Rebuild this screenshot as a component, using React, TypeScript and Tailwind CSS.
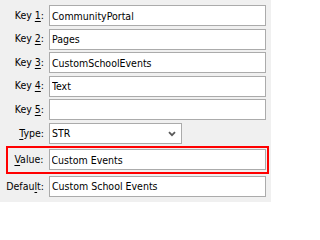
import React from "react";

const font = { fontFamily: '"DejaVu Sans Condensed", "Liberation Sans", Arial, sans-serif' };

interface FieldProps {
	before: string;
	mnemonic: string;
	after: string;
	value: string;
}

const Label: React.FC<{ before: string; mnemonic: string; after: string; className: string }> = ({
	before,
	mnemonic,
	after,
	className
}) => (
	<label className={`text-right text-[10.5px] text-black shrink-0 ${className}`}>
		{before}
		<span className="underline decoration-1 underline-offset-[1.5px]">{mnemonic}</span>
		{after}
	</label>
);

const TextBox: React.FC<{ value: string }> = ({ value }) => (
	<input
		readOnly
		value={value}
		className="h-[21px] w-[217px] border border-[#ababab] bg-white px-[2px] text-[10.5px] text-black outline-none"
		style={font}
	/>
);

const Field: React.FC<FieldProps> = ({ before, mnemonic, after, value }) => (
	<div className="flex h-[21px] items-center gap-[5px]">
		<Label before={before} mnemonic={mnemonic} after={after} className="w-[44px]" />
		<TextBox value={value} />
	</div>
);

export default function App() {
	return (
		<div className="flex h-[202px] w-[271px] flex-col bg-[#f0f0f0] pt-[5px]" style={font}>
			<div className="flex flex-col gap-[2.6px]">
				<Field before="Key " mnemonic="1" after=":" value="CommunityPortal" />
				<Field before="Key " mnemonic="2" after=":" value="Pages" />
				<Field before="Key " mnemonic="3" after=":" value="CustomSchoolEvents" />
				<Field before="Key " mnemonic="4" after=":" value="Text" />
				<Field before="Key " mnemonic="5" after=":" value="" />

				<div className="flex h-[21px] items-center gap-[5px]">
					<Label before="" mnemonic="T" after="ype:" className="w-[44px]" />
					<div className="flex h-[21px] w-[133px] items-center justify-between border border-[#ababab] bg-white pl-[2px] pr-[5px] text-[10.5px] text-black">
						<span>STR</span>
						<svg width="8" height="6" viewBox="0 0 8 6" className="mt-[1px]">
							<path d="M1 1.2 L4 4.2 L7 1.2" fill="none" stroke="#5a5a5a" strokeWidth="1.8" />
						</svg>
					</div>
				</div>
			</div>

			<div className="ml-[6px] mt-[2px] flex h-[28px] w-[263px] items-center gap-[5px] border-[2.5px] border-[#ff0000]">
				<Label before="" mnemonic="V" after="alue:" className="w-[35.5px]" />
				<TextBox value="Custom Events" />
			</div>

			<div className="mt-[2px]">
				<Field before="Defau" mnemonic="l" after="t:" value="Custom School Events" />
			</div>
		</div>
	);
}
